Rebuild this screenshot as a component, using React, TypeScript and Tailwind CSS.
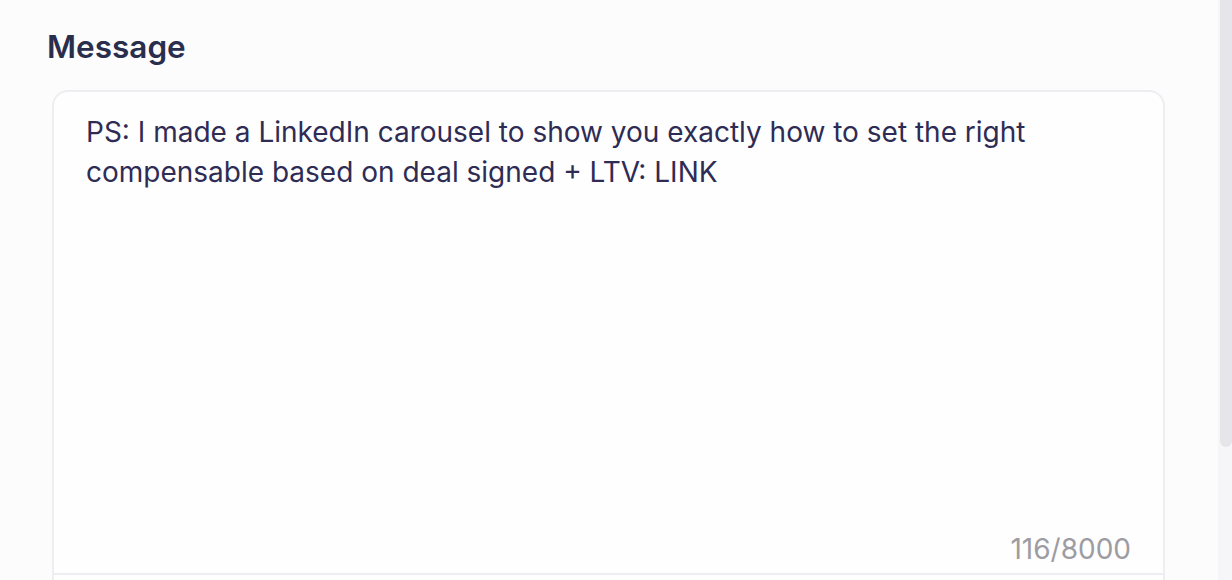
import React from "react";

export default function App() {
  return (
    <div
      className="relative h-[580px] w-[1232px] overflow-hidden bg-[#fcfcfd]"
      style={{ fontFamily: "Inter, 'Noto Sans', sans-serif" }}
    >
      <div className="pl-[47px] pr-[67px] pt-[27px]">
        <h2 className="text-[31.5px] leading-[40px] font-semibold text-[#2a2e4d]">
          Message
        </h2>
        <div className="mt-[23px] ml-[5px] rounded-[16px] border-2 border-[#eeedf2] bg-[#fefefe]">
          <div className="h-[481px] flex flex-col px-[32px] pt-[20px] pb-[4px]">
            <p className="text-[28px] leading-[40px] text-[#2e2c55]">
              PS: I made a LinkedIn carousel to show you exactly how to set the right
              compensable based on deal signed + LTV: LINK
            </p>
            <div className="mt-auto text-right text-[28px] leading-[40px] text-[#9d9ca3]">
              116/8000
            </div>
          </div>
          <div className="border-t-2 border-[#eeedf2] h-[40px]" />
        </div>
      </div>

      <div className="absolute right-0 top-0 h-full w-[14px] bg-[#f6f5f8]">
        <div className="ml-auto h-[447px] w-[12px] rounded-b-[6px] bg-[#e6e5ea]" />
      </div>
    </div>
  );
}
